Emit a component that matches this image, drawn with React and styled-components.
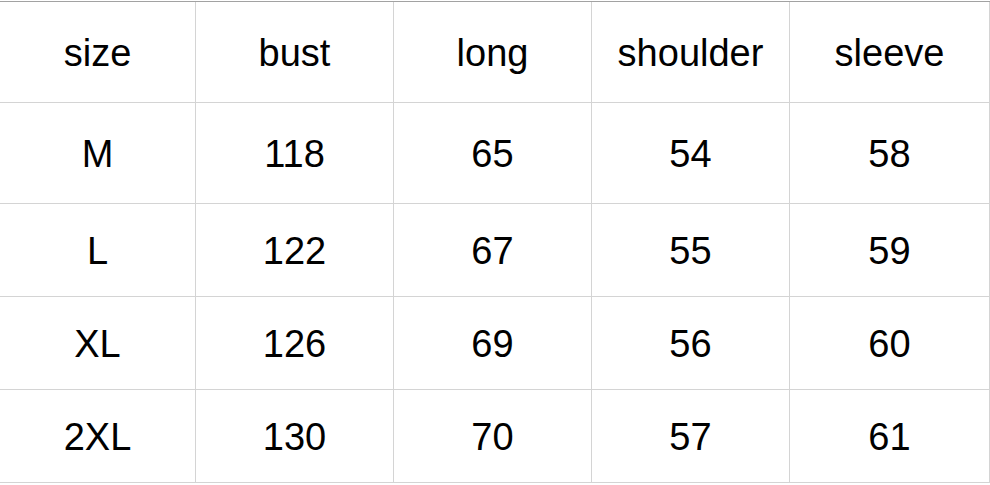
import React from "react";
import styled, { createGlobalStyle } from "styled-components";

const rows = [
  ["size", "bust", "long", "shoulder", "sleeve"],
  ["M", "118", "65", "54", "58"],
  ["L", "122", "67", "55", "59"],
  ["XL", "126", "69", "56", "60"],
  ["2XL", "130", "70", "57", "61"],
];

function App() {
  return (
    <>
      <GlobalStyle />
      <Page>
        <SizeGrid>
          {rows.map((row, r) =>
            row.map((cell, c) => (
              <Cell key={r + "-" + c} tall={r < 2}>
                {cell}
              </Cell>
            ))
          )}
        </SizeGrid>
      </Page>
    </>
  );
}

const GlobalStyle = createGlobalStyle`
  html, body {
    margin: 0;
    padding: 0;
    background: #ffffff;
  }
`;

const Page = styled.div`
  width: 990px;
  height: 485px;
  padding-top: 1px;
  box-sizing: border-box;
  background: #fff;
  overflow: hidden;
`;

const SizeGrid = styled.div`
  display: grid;
  grid-template-columns: 196px 198px 198px 198px 200px;
  border-top: 1px solid #a2a2a2;
  width: 990px;
`;

const Cell = styled.div`
  box-sizing: border-box;
  height: ${({ tall }) => (tall ? "101px" : "93px")};
  padding-top: 3px;
  border-right: 1px solid #d4d4d4;
  border-bottom: 1px solid #d4d4d4;
  display: flex;
  align-items: center;
  justify-content: center;
  font-family: "Liberation Sans", Arial, sans-serif;
  font-size: 38px;
  color: #000;
`;

export default App;
